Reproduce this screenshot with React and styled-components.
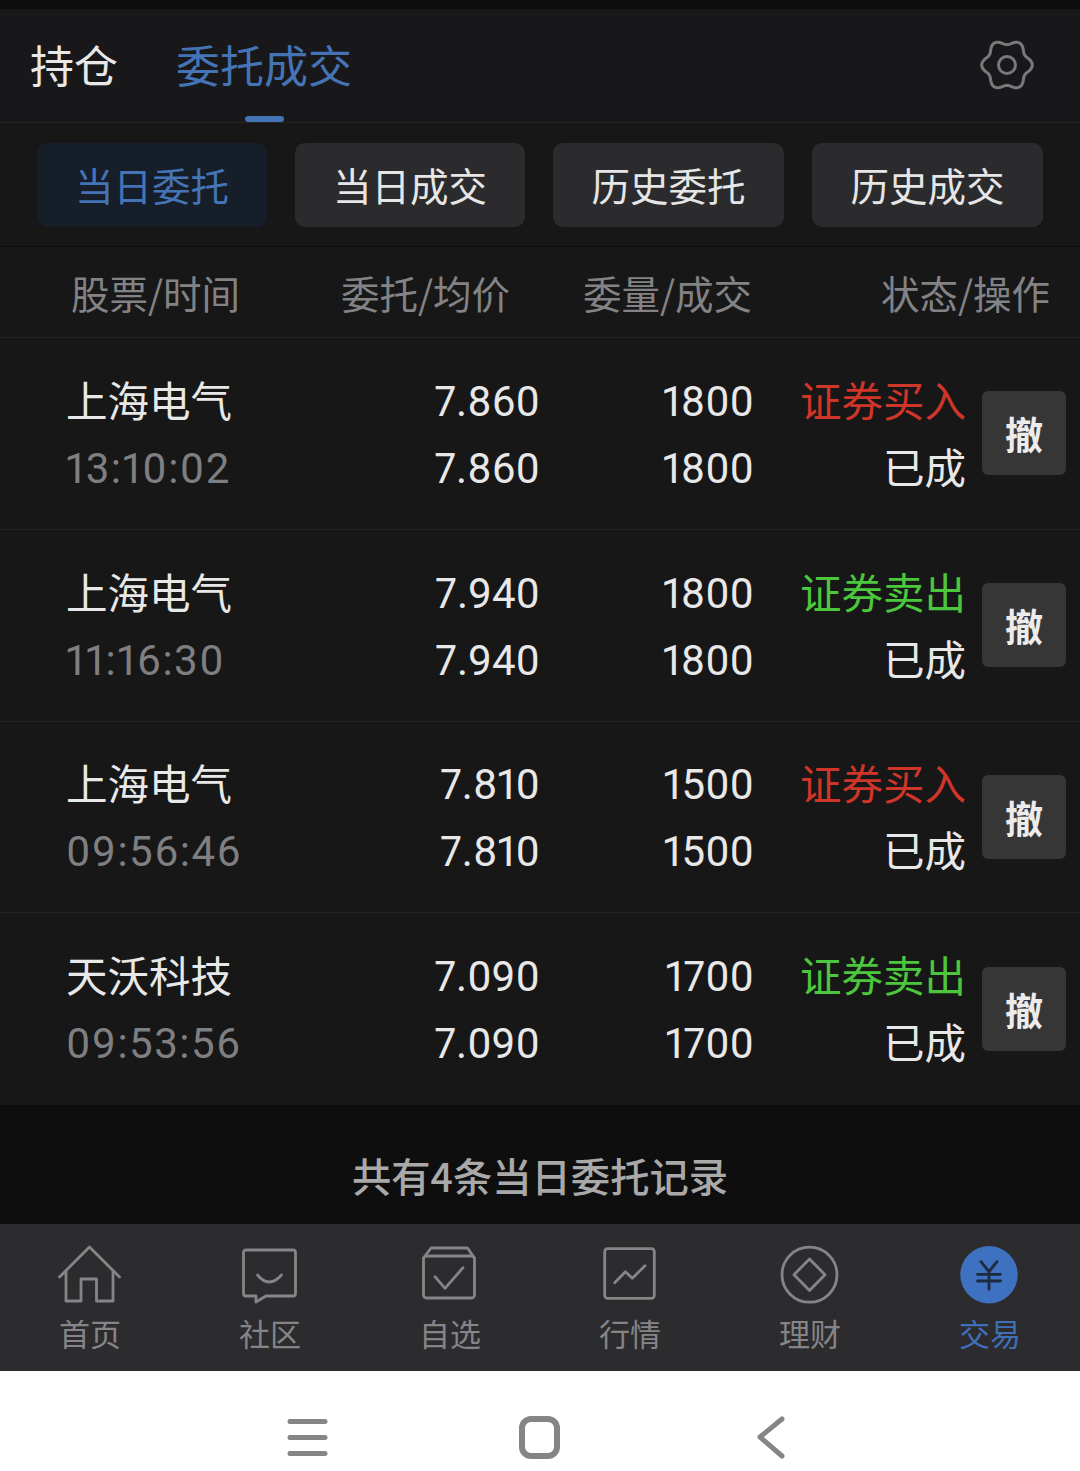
import React from 'react';
import styled, { createGlobalStyle } from 'styled-components';

const CJK = `"Noto Sans CJK SC", "Noto Sans", sans-serif`;
const NUM = `Roboto, "Noto Sans CJK SC", sans-serif`;

const GlobalStyle = createGlobalStyle`
  html, body {
    margin: 0;
    padding: 0;
    background: #fff;
  }
  * {
    box-sizing: border-box;
  }
`;

const Page = styled.div`
  width: 1080px;
  height: 1471px;
  display: flex;
  flex-direction: column;
  background: #18181a;
  font-family: ${CJK};
  overflow: hidden;
`;

const StatusStrip = styled.div`
  height: 9px;
  background: #0c0c0d;
`;

const Header = styled.header`
  height: 114px;
  display: flex;
  align-items: flex-start;
  padding: 0 30px;
  border-bottom: 1px solid #252527;
  background: #18181a;
`;

const MainTab = styled.div`
  position: relative;
  height: 113px;
  margin-right: 58px;
  font-size: 44px;
  line-height: 110px;
  color: ${p => (p.$active ? '#4574b6' : '#e8e8e8')};

  ${p =>
    p.$active &&
    `&::after {
      content: '';
      position: absolute;
      left: 69px;
      bottom: 0;
      width: 39px;
      height: 6px;
      border-radius: 3px;
      background: #4574b6;
    }`}
`;

const GearWrap = styled.div`
  margin-left: auto;
  margin-right: 16px;
  padding-top: 29px;
  line-height: 0;
`;

const SegmentRow = styled.div`
  height: 124px;
  display: grid;
  grid-template-columns: 230px 230px 231px 231px;
  column-gap: 28px;
  padding: 20px 37px 0;
  border-bottom: 1px solid #0f0f10;
  background: #171718;
`;

const Segment = styled.div`
  height: 84px;
  border-radius: 10px;
  font-size: 38.5px;
  line-height: 83px;
  text-align: center;
  background: ${p => (p.$active ? '#161e29' : '#2b2b2d')};
  color: ${p => (p.$active ? '#4574b6' : '#e6e6e6')};
`;

const ColumnHead = styled.div`
  height: 91px;
  display: grid;
  grid-template-columns: 169px 270px 242px 298px;
  padding-left: 71px;
  border-bottom: 1px solid #232325;
  font-size: 38.5px;
  line-height: 90px;
  color: #838385;
  background: #171718;
`;

const HeadCell = styled.div`
  text-align: ${p => (p.$left ? 'left' : 'right')};
  white-space: nowrap;
`;

const Row = styled.div`
  height: 192px;
  display: grid;
  grid-template-columns: 260px 214px 214px 212px 100px;
  align-items: center;
  padding: 0 14px 0 66px;
  border-bottom: 1px solid ${p => (p.$last ? 'transparent' : '#232325')};
  background: #171718;
`;

const Stack = styled.div`
  display: flex;
  flex-direction: column;
  gap: 5px;
  align-items: ${p => (p.$left ? 'flex-start' : 'flex-end')};
`;

const Line = styled.div`
  height: 62px;
  font-size: ${p => (p.$cjk ? '41.5px' : '42px')};
  line-height: ${p => (p.$cjk ? '60px' : '66px')};
  white-space: nowrap;
  font-family: ${p => (p.$cjk ? CJK : NUM)};
  font-variant-numeric: proportional-nums;
  letter-spacing: ${p => (p.$time ? '1.5px' : '0')};
  color: ${p => p.$color || '#e8e8e8'};
`;

const CancelButton = styled.div`
  width: 84px;
  height: 84px;
  margin-left: 16px;
  border-radius: 6px;
  background: #363637;
  color: #ececec;
  font-size: 38px;
  font-weight: 700;
  line-height: 84px;
  text-align: center;
`;

const Footer = styled.div`
  height: 119px;
  background: #0e0e0f;
  color: #a9a9a9;
  font-size: 39.3px;
  font-weight: 500;
  line-height: 139px;
  text-align: center;
`;

const TabBar = styled.nav`
  height: 147px;
  display: grid;
  grid-template-columns: repeat(6, 180px);
  background: #2c2c2e;
`;

const TabItem = styled.div`
  display: flex;
  flex-direction: column;
  align-items: center;
  padding-top: 19px;
  color: ${p => (p.$active ? '#3f6fb8' : '#858587')};
`;

const TabIcon = styled.svg`
  width: 64px;
  height: 64px;
  fill: none;
  stroke: #858587;
  stroke-width: 2.8;
  stroke-linecap: round;
  stroke-linejoin: round;
`;

const TabLabel = styled.span`
  margin-top: 8px;
  font-size: 31px;
  line-height: 36px;
`;

const SystemNav = styled.div`
  height: 100px;
  display: flex;
  align-items: center;
  justify-content: center;
  background: #fff;
`;

const NavSvg = styled.svg`
  width: 540px;
  height: 100px;
  fill: none;
  stroke: #858585;
  stroke-linecap: round;
  stroke-linejoin: round;
`;

// six soft lobes, one pointing right and one left, dents top and bottom
const gearPath = Array.from({ length: 120 }, (_, i) => {
  const a = (i / 120) * Math.PI * 2;
  const r = 22.8 + 2.5 * Math.cos(6 * a);
  return `${i ? 'L' : 'M'}${(27 + r * Math.cos(a)).toFixed(2)} ${(27 + r * Math.sin(a)).toFixed(2)}`;
}).join(' ') + ' Z';

const Gear = () => (
  <svg width="54" height="54" viewBox="0 0 54 54" fill="none" stroke="#79797b" strokeWidth="3">
    <path d={gearPath} />
    <circle cx="27" cy="27" r="8.5" />
  </svg>
);

const HomeIcon = () => (
  <TabIcon viewBox="0 0 64 64">
    <path d="M1.5 34 L31.5 4 L61.5 34" />
    <path d="M8 28 V58 H23 V36 H38.5 V58 H55 V28" />
  </TabIcon>
);

const ChatIcon = () => (
  <TabIcon viewBox="0 0 64 64">
    <path d="M8 7 H55 a2.5 2.5 0 0 1 2.5 2.5 V50.5 a2.5 2.5 0 0 1 -2.5 2.5 H28 L18 59 V53 H8 a2.5 2.5 0 0 1 -2.5 -2.5 V9.5 A2.5 2.5 0 0 1 8 7 Z" />
    <path d="M19.5 32 Q31 46 43.5 32" />
  </TabIcon>
);

const WatchIcon = () => (
  <TabIcon viewBox="0 0 64 64">
    <rect x="5.5" y="13" width="51" height="42" rx="3" />
    <path d="M5.5 15 L13 5 H49.5 L56.5 15" />
    <path d="M17 33.7 L27 45.3 L45 24.7" />
  </TabIcon>
);

const QuoteIcon = () => (
  <TabIcon viewBox="0 0 64 64">
    <rect x="6.7" y="5.7" width="49.6" height="49.6" rx="3" />
    <path d="M16.7 39.7 L27.4 28.7 L34.3 35.3 L47 22.7" />
  </TabIcon>
);

const FinanceIcon = () => (
  <TabIcon viewBox="0 0 64 64">
    <circle cx="31.5" cy="31.7" r="27.5" />
    <path d="M31.5 16 L47 31.7 L31.5 47.4 L16 31.7 Z" />
  </TabIcon>
);

const TradeIcon = () => (
  <TabIcon viewBox="0 0 64 64">
    <circle cx="31" cy="31.7" r="28.7" fill="#3f71c1" stroke="none" />
    <path d="M23 18.7 L31 28.7 L39 18.7 M19.5 31.3 H42.5 M19.5 38 H42.5 M31 28.7 V46.3" stroke="#1e2a3e" />
  </TabIcon>
);

const tabs = [
  { label: '首页', Icon: HomeIcon },
  { label: '社区', Icon: ChatIcon },
  { label: '自选', Icon: WatchIcon },
  { label: '行情', Icon: QuoteIcon },
  { label: '理财', Icon: FinanceIcon },
  { label: '交易', Icon: TradeIcon, active: true },
];

const segments = ['当日委托', '当日成交', '历史委托', '历史成交'];

const RED = '#cf3528';
const GREEN = '#4cc63d';

const orders = [
  { name: '上海电气', time: '13:10:02', price: '7.860', qty: '1800', side: '证券买入', color: RED },
  { name: '上海电气', time: '11:16:30', price: '7.940', qty: '1800', side: '证券卖出', color: GREEN },
  { name: '上海电气', time: '09:56:46', price: '7.810', qty: '1500', side: '证券买入', color: RED },
  { name: '天沃科技', time: '09:53:56', price: '7.090', qty: '1700', side: '证券卖出', color: GREEN },
];

const App = () => {
  return (
    <Page>
      <GlobalStyle />
      <StatusStrip />
      <Header>
        <MainTab>持仓</MainTab>
        <MainTab $active>委托成交</MainTab>
        <GearWrap>
          <Gear />
        </GearWrap>
      </Header>
      <SegmentRow>
        {segments.map((s, i) => (
          <Segment key={s} $active={i === 0}>
            {s}
          </Segment>
        ))}
      </SegmentRow>
      <ColumnHead>
        <HeadCell $left>股票/时间</HeadCell>
        <HeadCell>委托/均价</HeadCell>
        <HeadCell>委量/成交</HeadCell>
        <HeadCell>状态/操作</HeadCell>
      </ColumnHead>
      {orders.map((o, i) => (
        <Row key={o.time} $last={i === orders.length - 1}>
          <Stack $left>
            <Line $cjk>{o.name}</Line>
            <Line $time $color="#7f7f81">{o.time}</Line>
          </Stack>
          <Stack>
            <Line>{o.price}</Line>
            <Line>{o.price}</Line>
          </Stack>
          <Stack>
            <Line>{o.qty}</Line>
            <Line>{o.qty}</Line>
          </Stack>
          <Stack>
            <Line $cjk $color={o.color}>{o.side}</Line>
            <Line $cjk>已成</Line>
          </Stack>
          <CancelButton>撤</CancelButton>
        </Row>
      ))}
      <Footer>共有4条当日委托记录</Footer>
      <TabBar>
        {tabs.map(({ label, Icon, active }) => (
          <TabItem key={label} $active={active}>
            <Icon />
            <TabLabel>{label}</TabLabel>
          </TabItem>
        ))}
      </TabBar>
      <SystemNav>
        <NavSvg viewBox="270 1371 540 100">
          <path d="M290 1421.5 H325 M290 1437.5 H325 M290 1453.5 H325" strokeWidth="5" />
          <rect x="522" y="1419" width="35" height="37" rx="9" strokeWidth="6" />
          <path d="M782 1419 L760 1437 L782 1456" strokeWidth="5" />
        </NavSvg>
      </SystemNav>
    </Page>
  );
};

export default App;
